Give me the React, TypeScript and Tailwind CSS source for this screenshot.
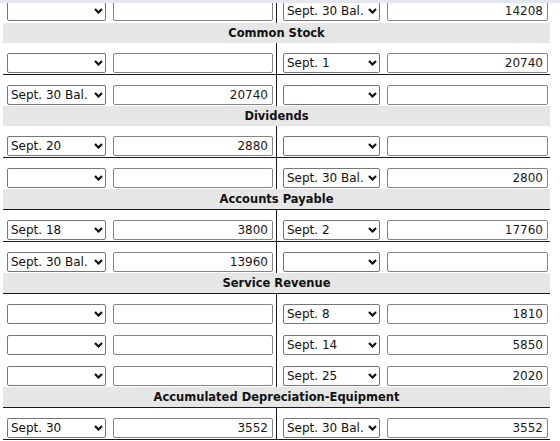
import React from 'react';

// T-account entry grid: each account is a header bar followed by debit | credit rows.

type Entry = { date?: string; amount?: string };
type Row = { left: Entry; right: Entry; line?: boolean };
type Account = { name: string; lineUnderHeader?: boolean; rows: Row[] };

const BLANK: Entry = {};

const ACCOUNTS: Account[] = [
  {
    name: 'Common Stock',
    rows: [
      { left: BLANK, right: { date: 'Sept. 1', amount: '20740' }, line: true },
      { left: { date: 'Sept. 30 Bal.', amount: '20740' }, right: BLANK },
    ],
  },
  {
    name: 'Dividends',
    rows: [
      { left: { date: 'Sept. 20', amount: '2880' }, right: BLANK, line: true },
      { left: BLANK, right: { date: 'Sept. 30 Bal.', amount: '2800' } },
    ],
  },
  {
    name: 'Accounts Payable',
    lineUnderHeader: true,
    rows: [
      {
        left: { date: 'Sept. 18', amount: '3800' },
        right: { date: 'Sept. 2', amount: '17760' },
        line: true,
      },
      { left: { date: 'Sept. 30 Bal.', amount: '13960' }, right: BLANK },
    ],
  },
  {
    name: 'Service Revenue',
    lineUnderHeader: true,
    rows: [
      { left: BLANK, right: { date: 'Sept. 8', amount: '1810' } },
      { left: BLANK, right: { date: 'Sept. 14', amount: '5850' } },
      { left: BLANK, right: { date: 'Sept. 25', amount: '2020' } },
    ],
  },
  {
    name: 'Accumulated Depreciation-Equipment',
    lineUnderHeader: true,
    rows: [
      {
        left: { date: 'Sept. 30', amount: '3552' },
        right: { date: 'Sept. 30 Bal.', amount: '3552' },
        line: true,
      },
    ],
  },
];

function DateSelect({ value, width }: { value?: string; width: string }) {
  const v = value ?? '';
  return (
    <div className={`relative h-[20px] ${width} shrink-0`}>
      <select
        defaultValue={v}
        className="appearance-none block w-full h-full border border-[#767676] rounded-[2px] bg-white pl-[3px] pr-[14px] py-0 text-[12px] leading-[18px] text-[#111] outline-none"
      >
        <option value={v}>{v}</option>
      </select>
      <svg
        className="absolute right-[3px] top-[7px] pointer-events-none"
        width="9"
        height="6"
        viewBox="0 0 9 6"
        fill="none"
      >
        <path d="M1 1L4.5 4.5L8 1" stroke="#111" strokeWidth="2.2" />
      </svg>
    </div>
  );
}

function AmountInput({ value, width }: { value?: string; width: string }) {
  return (
    <input
      readOnly
      defaultValue={value ?? ''}
      className={`block h-[20px] ${width} shrink-0 border border-[#858585] rounded-[2px] bg-white pr-[4px] py-0 text-right text-[12px] leading-[18px] text-[#1a1a1a] outline-none`}
    />
  );
}

function EntryRow({ row, first }: { row: Row; first?: boolean }) {
  const pad = first ? 'pt-[1px] pb-[2px]' : 'pt-[10px] pb-[1px]';
  return (
    <div className={`flex ${row.line ? 'border-b border-[#1a1a1a]' : ''}`}>
      <div className={`w-[273px] flex items-center gap-[7px] pl-[4px] ${pad}`}>
        <DateSelect value={row.left.date} width="w-[99px]" />
        <AmountInput value={row.left.amount} width="w-[160px]" />
      </div>
      <div className="w-px bg-[#1a1a1a]" />
      <div className={`w-[273px] flex items-center gap-[7px] pl-[6px] ${pad}`}>
        <DateSelect value={row.right.date} width="w-[97px]" />
        <AmountInput value={row.right.amount} width="w-[161px]" />
      </div>
    </div>
  );
}

function AccountBlock({ account }: { account: Account }) {
  return (
    <div>
      <div className="h-[20px] pt-[2px] bg-[#e6e6e6] flex items-center justify-center text-[11.5px] font-bold text-[#111]">
        {account.name}
      </div>
      {account.lineUnderHeader && <div className="h-px bg-[#1a1a1a]" />}
      {account.rows.map((r, i) => (
        <EntryRow key={i} row={r} />
      ))}
    </div>
  );
}

export default function App() {
  return (
    <div className="relative w-[560px] h-[441px] overflow-hidden bg-white font-['DejaVu_Sans',Verdana,sans-serif]">
      <div className="w-[547px] ml-[3px]">
        <EntryRow first row={{ left: BLANK, right: { date: 'Sept. 30 Bal.', amount: '14208' } }} />
        {ACCOUNTS.map((a) => (
          <AccountBlock key={a.name} account={a} />
        ))}
      </div>
      <div className="absolute top-0 inset-x-0 h-[3px] bg-[#e4e8ee]" />
    </div>
  );
}
